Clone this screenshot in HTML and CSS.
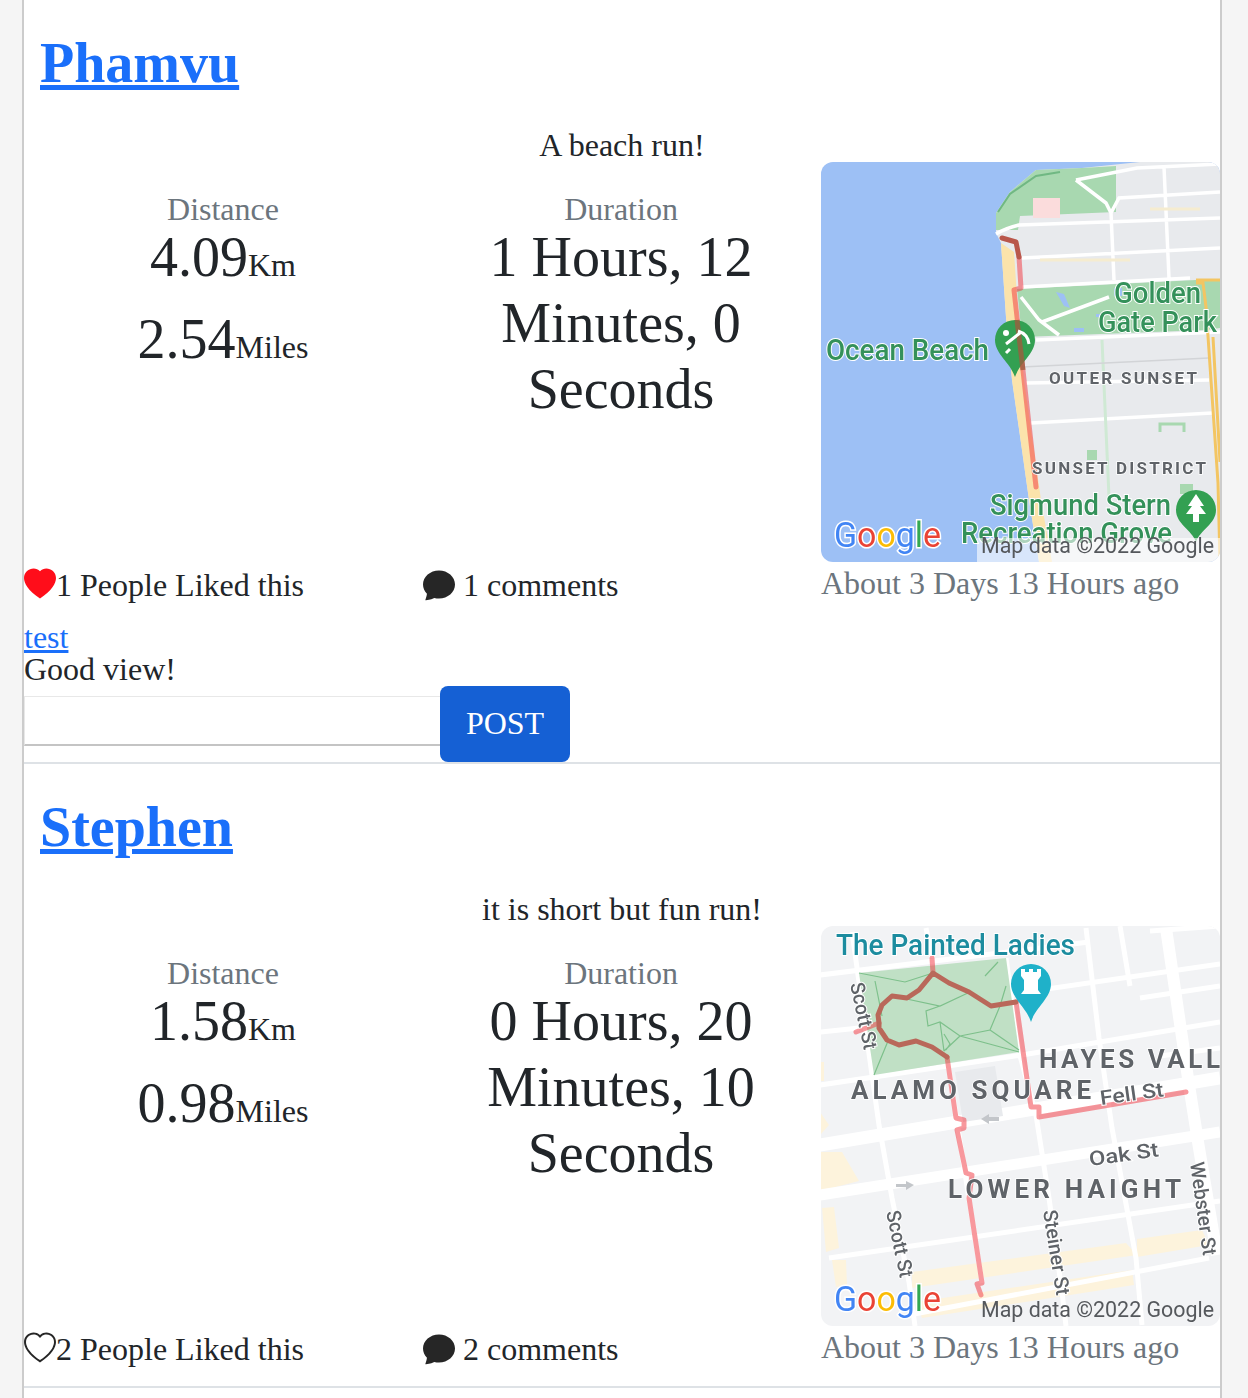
FILE: index.html
```html
<!DOCTYPE html>
<html lang="en">
<head>
<meta charset="utf-8">
<title>Feed</title>
<link rel="stylesheet" href="styles.css">
</head>
<body>
<main class="feed">
  <article class="post">
    <h1 class="author"><a href="#">Phamvu</a></h1>
    <p class="desc">A beach run!</p>
    <div class="stats">
      <div class="stat">
        <div class="label">Distance</div>
        <p class="value">4.09<small>Km</small></p>
        <p class="value">2.54<small>Miles</small></p>
      </div>
      <div class="stat">
        <div class="label">Duration</div>
        <p class="value">1 Hours, 12 Minutes, 0 Seconds</p>
      </div>
      <svg class="map" viewBox="1 0 399 400" role="img" aria-label="Map of Ocean Beach">
        <rect width="400" height="400" fill="#9dc0f5"/>
        <path d="M320 0 L262 6 L216 8 L190 30 L176 51 L176 71 L181 81 L186 155 L192 218 L202 288 L209 338 L219 400 L400 400 L400 0Z" fill="#e8eaed"/>
        <path d="M181 81 L194 90 L197 135 L204 218 L214 288 L221 338 L232 400 L219 400 L209 338 L202 288 L192 218 L186 155Z" fill="#fbe3ab"/>
        <path d="M216 8 L262 6 L296 4 L296 50 L200 54 L198 68 L176 68 L176 51 L190 30Z" fill="#a8d8b0"/>
        <path d="M178 50 L190 32 L216 14 L240 10" fill="none" stroke="#70b883" stroke-width="2"/>
        <path d="M213 36 L240 36 V56 H213Z" fill="#fbdcdc"/>
        <path d="M197 127 L376 118 L400 118 L400 166 L386 168 L202 175Z" fill="#a8d8b0"/>
        <path d="M236 130 l8 2 6 14 -6 -2z M294 126 h8 v8 h-8z M254 166 h10 v4 h-10z M276 152 h6 v3 h-6z" fill="#9dc0f5"/>
        <path d="M176 72 Q186 66 199 63 L400 56 M256 18 L286 41 L291 51 M256 18 L317 6 L400 2 M400 30 L299 36 L291 51 L294 118 M344 5 L349 116 M202 96 L400 86 M202 125 L370 116 M201 135 L219 158 L239 173 M222 160 L289 135 M216 178 L400 170 M206 221 L389 218 M211 261 L392 251" fill="none" stroke="#fff" stroke-width="3.5"/>
        <path d="M282 178 L289 335" fill="none" stroke="#cfe9d4" stroke-width="3"/>
        <path d="M330 47 h50 M220 98 h90" fill="none" stroke="#f5ecd0" stroke-width="3"/>
        <path d="M202 205 L389 196" fill="none" stroke="#d2d4d7" stroke-width="1.5"/>
        <path d="M340 270 v-8 h24 v8" fill="none" stroke="#a8d8b0" stroke-width="3"/>
        <rect x="267" y="288" width="10" height="10" fill="#a8d8b0"/>
        <rect x="360" y="322" width="13" height="10" fill="#a8d8b0"/>
        <path d="M376 121 L383 121 L386 145 L398 321 L400 400 M400 118 L376 118 M393 175 L400 300" fill="none" stroke="#f3c562" stroke-width="3"/>
        <path d="M199 95 L201 126 L194 128 L216 325" fill="none" stroke="#f2323c" stroke-opacity=".5" stroke-width="5" stroke-linejoin="round" stroke-linecap="round"/>
        <path d="M182 76 L196 80 L199 95" fill="none" stroke="#b9574b" stroke-width="5" stroke-linejoin="round" stroke-linecap="round"/>
        <path d="M195 215 C190 200 175 192 175 178 A20 20 0 1 1 215 178 C215 192 200 200 195 215Z" fill="#33a052"/>
        <path d="M197 158 L203 208" stroke="#9c5c3e" stroke-opacity=".8" stroke-width="5"/>
        <path d="M186 182 L200 171 M198 169 Q208 172 209 182 M190 187 L186 191" fill="none" stroke="#fff" stroke-width="3"/>
        <circle cx="186" cy="171" r="3" fill="#fff"/>
        <path d="M376 380 C372 368 356 362 356 348 A20 20 0 1 1 396 348 C396 362 380 368 376 380Z" fill="#33a052"/>
        <path d="M376 332 L384 344 H380 L386 352 H379 V360 H373 V352 H366 L372 344 H368Z" fill="#fff"/>
        <text class="poi green" x="6" y="198" textLength="163" lengthAdjust="spacingAndGlyphs">Ocean Beach</text>
        <text class="poi green" x="294" y="141" textLength="87" lengthAdjust="spacingAndGlyphs">Golden</text>
        <text class="poi green" x="278" y="170" textLength="119" lengthAdjust="spacingAndGlyphs">Gate Park</text>
        <text class="area" x="229" y="222" textLength="148">OUTER SUNSET</text>
        <text class="area" x="212" y="312" textLength="174">SUNSET DISTRICT</text>
        <text class="poi green" x="170" y="353" textLength="181" lengthAdjust="spacingAndGlyphs">Sigmund Stern</text>
        <text class="poi green" x="141" y="381" textLength="211" lengthAdjust="spacingAndGlyphs">Recreation Grove</text>
        <rect x="157" y="376" width="243" height="24" fill="#fff" fill-opacity=".6"/>
        <text class="google" x="14" y="385" textLength="107" lengthAdjust="spacingAndGlyphs"><tspan fill="#4285f4">G</tspan><tspan fill="#ea4335">o</tspan><tspan fill="#fbbc05">o</tspan><tspan fill="#4285f4">g</tspan><tspan fill="#34a853">l</tspan><tspan fill="#ea4335">e</tspan></text>
        <text class="credit" x="161" y="391" textLength="233" lengthAdjust="spacingAndGlyphs">Map data ©2022 Google</text>
      </svg>
    </div>
    <div class="actions">
      <div class="action likes">
        <svg class="icon heart-on" viewBox="0 0 16 16"><path fill-rule="evenodd" d="M8 1.314C12.438-3.248 23.534 4.735 8 15-7.534 4.736 3.562-3.248 8 1.314z"/></svg>1 People Liked this
      </div>
      <div class="action comments">
        <svg class="icon" viewBox="0 0 16 16"><path d="M8 15c4.418 0 8-3.134 8-7s-3.582-7-8-7-8 3.134-8 7c0 1.76.743 3.37 1.97 4.6-.097 1.016-.417 2.13-.771 2.966-.079.186.074.394.273.362 2.256-.37 3.597-.938 4.18-1.234A9.06 9.06 0 0 0 8 15z"/></svg> 1 comments
      </div>
      <div class="time">About 3 Days 13 Hours ago</div>
    </div>
    <div class="comment"><a href="#">test</a><div>Good view!</div></div>
    <form class="comment-form">
      <input class="comment-input" type="text">
      <button class="post-btn" type="button">POST</button>
    </form>
  </article>

  <article class="post">
    <h1 class="author"><a href="#">Stephen</a></h1>
    <p class="desc">it is short but fun run!</p>
    <div class="stats">
      <div class="stat">
        <div class="label">Distance</div>
        <p class="value">1.58<small>Km</small></p>
        <p class="value">0.98<small>Miles</small></p>
      </div>
      <div class="stat">
        <div class="label">Duration</div>
        <p class="value">0 Hours, 20 Minutes, 10 Seconds</p>
      </div>
      <svg class="map" viewBox="1 0 399 400" role="img" aria-label="Map of Alamo Square">
        <rect width="400" height="400" fill="#f2f3f5"/>
        <path d="M0 226 L22 226 L39 255 L0 265Z M2 282 L14 281 L19 322 L6 326Z M0 136 L4 136 L4 155 L0 155Z M0 186 L9 199 L0 209Z M92 346 L166 336 L306 317 L317 329 L92 362Z M317 313 L382 304 L389 319 L317 331Z M96 376 L312 344 L314 359 L102 392Z M12 334 L26 334 L27 359 L16 361Z" fill="#fdf3dc"/>
        <path d="M0 49 L269 16 M186 69 L400 38 M0 106 L39 102 M0 159 L202 129 L400 96 M9 332 L400 275 M89 389 L389 332 M330 5 L400 0 M320 72 L400 60 M340 130 L400 122" fill="none" stroke="#fff" stroke-width="5"/>
        <path d="M0 219 L400 152" fill="none" stroke="#fff" stroke-width="13"/>
        <path d="M0 269 L400 206" fill="none" stroke="#fff" stroke-width="11"/>
        <path d="M32 6 L59 199 L72 272 L89 356 L95 400 M186 32 L199 126 L216 189 L229 272 L242 366 L246 400 M266 2 L279 112 L292 202 L316 332 L322 399 M106 2 L112 32 M127 131 L162 357 M300 0 L310 60" fill="none" stroke="#fff" stroke-width="5"/>
        <path d="M346 2 L369 159 L379 222 L397 329" fill="none" stroke="#fff" stroke-width="12"/>
        <path d="M39 47 L186 32 L199 126 L54 149Z" fill="#c0e0c5"/>
        <path d="M39 47 L85 56 L113 47 M165 50 L178 36 M54 149 L68 115 M55 55 L62 90 M82 72 L120 80 L150 66 M120 80 L106 85 L108 100 L120 96 L140 110 L199 126 M140 110 L170 104 L180 80 L186 60 M120 96 L124 125 M140 110 L124 125 M124 108 L130 118 L126 124 M170 104 L199 124" fill="none" stroke="#7dc08b" stroke-width="1.2"/>
        <path d="M135 146 L175 140 L183 190 L143 196Z" fill="#e8eaed"/>
        <path d="M36 106 L59 97 M113 47 L112 32 M127 131 L136 192 L144 194 L144 202 L137 204 L146 247 L152 249 L149 272 L162 357 L157 358 L161 369 M196 76 L211 181 L219 181 L219 191 L366 166" fill="none" stroke="#f2323c" stroke-opacity=".5" stroke-width="5" stroke-linejoin="round" stroke-linecap="round"/>
        <path d="M59 97 L58 89 L62 79 L72 70 L87 72 L99 64 L113 47 L129 57 L149 66 L171 80 L196 76 M59 97 L59 102 L67 114 L79 119 L96 115 L112 121 L127 131" fill="none" stroke="#b9685a" stroke-width="5" stroke-linejoin="round" stroke-linecap="round"/>
        <path d="M211 96 C207 82 191 72 191 58 A20 20 0 1 1 231 58 C231 72 215 82 211 96Z" fill="#1fb1c9"/>
        <path d="M201 68 L204 64 V54 L201 50 V43 H205 V46 H209 V43 H213 V46 H217 V43 H221 V50 L218 54 V64 L221 68Z" fill="#fff"/>
        <path d="M161 193 l8 -5 v3 h10 v4 h-10 v3z M94 259 l-8 -4 v3 h-10 v3 h10 v3z" fill="#c3c6ca"/>
        <text class="poi teal" x="16" y="29" textLength="239" lengthAdjust="spacingAndGlyphs">The Painted Ladies</text>
        <text class="area big" x="219" y="142" textLength="181">HAYES VALL</text>
        <text class="area big" x="31" y="173" textLength="240">ALAMO SQUARE</text>
        <text class="area big" x="128" y="272" textLength="233">LOWER HAIGHT</text>
        <text class="street" transform="translate(281 179) rotate(-8)" textLength="64" lengthAdjust="spacingAndGlyphs">Fell St</text>
        <text class="street" transform="translate(270 240) rotate(-8)" textLength="70" lengthAdjust="spacingAndGlyphs">Oak St</text>
        <text class="street" transform="translate(30 58) rotate(78)" textLength="68" lengthAdjust="spacingAndGlyphs">Scott St</text>
        <text class="street" transform="translate(66 286) rotate(78)" textLength="68" lengthAdjust="spacingAndGlyphs">Scott St</text>
        <text class="street" transform="translate(223 285) rotate(81)" textLength="86" lengthAdjust="spacingAndGlyphs">Steiner St</text>
        <text class="street" transform="translate(370 237) rotate(82)" textLength="94" lengthAdjust="spacingAndGlyphs">Webster St</text>
        <text class="google" x="14" y="385" textLength="107" lengthAdjust="spacingAndGlyphs"><tspan fill="#4285f4">G</tspan><tspan fill="#ea4335">o</tspan><tspan fill="#fbbc05">o</tspan><tspan fill="#4285f4">g</tspan><tspan fill="#34a853">l</tspan><tspan fill="#ea4335">e</tspan></text>
        <text class="credit" x="161" y="391" textLength="233" lengthAdjust="spacingAndGlyphs">Map data ©2022 Google</text>
      </svg>
    </div>
    <div class="actions">
      <div class="action likes">
        <svg class="icon" viewBox="0 0 16 16"><path d="m8 2.748-.717-.737C5.6.281 2.514.878 1.4 3.053c-.523 1.023-.641 2.5.314 4.385.92 1.815 2.834 3.989 6.286 6.357 3.452-2.368 5.365-4.542 6.286-6.357.955-1.886.838-3.362.314-4.385C13.486.878 10.4.28 8.717 2.01L8 2.748zM8 15C-7.333 4.868 3.279-3.04 7.824 1.143c.06.055.119.112.176.171a3.12 3.12 0 0 1 .176-.17C12.72-3.042 23.333 4.867 8 15z"/></svg>2 People Liked this
      </div>
      <div class="action comments">
        <svg class="icon" viewBox="0 0 16 16"><path d="M8 15c4.418 0 8-3.134 8-7s-3.582-7-8-7-8 3.134-8 7c0 1.76.743 3.37 1.97 4.6-.097 1.016-.417 2.13-.771 2.966-.079.186.074.394.273.362 2.256-.37 3.597-.938 4.18-1.234A9.06 9.06 0 0 0 8 15z"/></svg> 2 comments
      </div>
      <div class="time">About 3 Days 13 Hours ago</div>
    </div>
  </article>
</main>
</body>
</html>
```

FILE: styles.css
```css
* { box-sizing: border-box; }

html, body { margin: 0; padding: 0; }

body {
  background: #f5f5f5;
  color: #212529;
  font-family: "Liberation Serif", "Times New Roman", serif;
  font-size: 32px;
  line-height: 32px;
}

a { color: #1a6ffa; }

.feed {
  width: 1200px;
  min-height: 100vh;
  margin-left: 22px;
  background: #fff;
  border-left: 2px solid #ccc;
  border-right: 2px solid #ccc;
}

.post { border-bottom: 2px solid #dee2e6; }

.author {
  margin: 0;
  padding: 30px 16px 32px;
  font-size: 56px;
  line-height: 67px;
  font-weight: 700;
}

.desc {
  margin: 0 0 1px 398px;
  width: 400px;
  text-align: center;
}

.stats {
  display: grid;
  grid-template-columns: 398px 398px 400px;
  height: 400px;
}

.stat {
  padding-top: 31px;
  text-align: center;
}

.label {
  margin-bottom: -1px;
  color: #6c757d;
}

.value {
  margin: 0 0 16px;
  font-size: 56px;
  line-height: 66px;
}

.value small {
  font-size: 32px;
  line-height: 0;
}

.map {
  display: block;
  width: 399px;
  height: 400px;
  margin-left: 1px;
  border-radius: 12px;
  filter: blur(0.6px);
  font-family: Roboto, "Liberation Sans", sans-serif;
}

.poi {
  font-size: 29px;
  font-weight: 500;
  paint-order: stroke;
  stroke: #fff;
  stroke-width: 2px;
}

.green { fill: #34915a; }
.teal { fill: #1c8c9f; }

.area {
  font-size: 17px;
  font-weight: 700;
  fill: #5f6368;
  paint-order: stroke;
  stroke: #fff;
  stroke-width: 1.5px;
}

.area.big { font-size: 26px; }

.street {
  font-size: 20px;
  font-weight: 500;
  fill: #5f6368;
  paint-order: stroke;
  stroke: #fff;
  stroke-width: 2px;
}

.google {
  font-size: 35px;
  font-weight: 400;
  paint-order: stroke;
  stroke: #fff;
  stroke-width: 3px;
}

.credit {
  font-size: 22px;
  fill: #55585c;
}

.actions {
  display: grid;
  grid-template-columns: 398px 399px 399px;
  height: 60px;
}

.action { padding-top: 6px; }

.icon {
  width: 32px;
  height: 33px;
  fill: #262626;
  vertical-align: -5px;
}

.heart-on { fill: #ff0d1a; }

.comments { padding-left: 1px; }

.time {
  padding-top: 5px;
  color: #6c757d;
}

.comment { margin-top: -1px; }

.comment a { display: block; }

.comment-form {
  display: flex;
  align-items: flex-start;
  margin-top: 1px;
}

.comment-input {
  width: 416px;
  height: 50px;
  margin-top: 10px;
  padding: 0;
  background: #fff;
  border: solid #c4c4c4;
  border-width: 1px 0 2px 1px;
  border-top-color: #e8e8e8;
  border-left-color: #e8e8e8;
}

.post-btn {
  width: 130px;
  height: 76px;
  padding: 0 0 2px;
  background: #1560d4;
  color: #fff;
  border: 0;
  border-radius: 8px;
  font-family: inherit;
  font-size: 32px;
}
```
